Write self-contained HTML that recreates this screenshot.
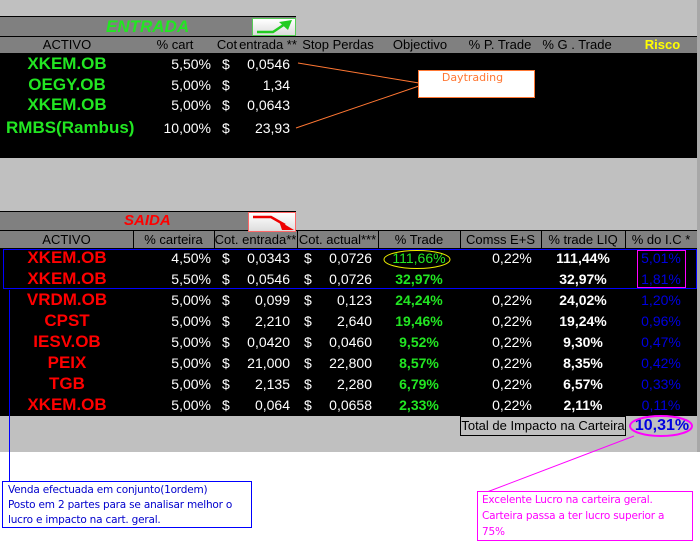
<!DOCTYPE html>
<html><head><meta charset="utf-8"><style>
*{margin:0;padding:0;box-sizing:border-box}
body{width:700px;height:545px;background:#fff;position:relative;overflow:hidden;font-family:"Liberation Sans",sans-serif}
div,span{position:absolute}
.t{line-height:20px;white-space:nowrap;font-size:14px}
.h{font-size:13px;color:#000;line-height:16px;text-align:center;white-space:nowrap}
.w{color:#fff}.g{color:#22e622;font-weight:bold}.r{color:#f00;font-weight:bold;font-size:17px}.b{color:#0000e0}
.c{text-align:center}.rt{text-align:right}
</style></head><body>
<div style="left:0;top:0;width:700px;height:452px;background:#c0c0c0"></div>
<div style="left:0;top:16px;width:296px;height:1px;background:#000"></div>
<div style="left:0;top:17px;width:296px;height:19px;background:#808080"></div>
<div style="left:0;top:36px;width:697px;height:1px;background:#000"></div>
<div style="left:0;top:37px;width:697px;height:16px;background:#808080"></div>
<div style="left:0;top:53px;width:697px;height:105px;background:#000"></div>
<div class="t" style="left:106px;top:17px;font-size:17px;font-style:italic;font-weight:bold;color:#22e622;line-height:19px">ENTRADA</div>
<div style="left:252px;top:18px;width:44px;height:18px;border:1px solid #5c5;background:linear-gradient(#fff,#ddd)">
<svg width="42" height="16" style="position:absolute;left:0;top:0"><path d="M4 13 H20 L32 5" stroke="#2c2" stroke-width="2.5" fill="none"/><path d="M26 3 L39 1 L35 11 Z" fill="#2c2"/></svg></div>
<div class="h" style="left:20px;top:37px;width:94px">ACTIVO</div>
<div class="h" style="left:150px;top:37px;width:50px">% cart</div>
<div class="h" style="left:212px;top:37px;width:30px">Cot</div>
<div class="h" style="left:238px;top:37px;width:60px">entrada **</div>
<div class="h" style="left:300px;top:37px;width:76px">Stop Perdas</div>
<div class="h" style="left:385px;top:37px;width:70px">Objectivo</div>
<div class="h" style="left:465px;top:37px;width:70px">% P. Trade</div>
<div class="h" style="left:542px;top:37px;width:70px">% G . Trade</div>
<div class="h" style="left:635px;top:37px;width:55px;color:#ff0;font-weight:bold">Risco</div>
<div class="t g c" style="left:0;top:54px;width:134px;font-size:17px">XKEM.OB</div>
<div class="t g c" style="left:0;top:75px;width:134px;font-size:17px">OEGY.OB</div>
<div class="t g c" style="left:0;top:95px;width:134px;font-size:17px">XKEM.OB</div>
<div class="t g" style="left:6px;top:118px;font-size:17px">RMBS(Rambus)</div>
<div class="t w rt" style="right:489px;top:54px">5,50%</div>
<div class="t w rt" style="right:489px;top:75px">5,00%</div>
<div class="t w rt" style="right:489px;top:95px">5,00%</div>
<div class="t w rt" style="right:489px;top:118px">10,00%</div>
<div class="t w" style="left:222px;top:54px">$</div><div class="t w" style="left:222px;top:75px">$</div><div class="t w" style="left:222px;top:95px">$</div><div class="t w" style="left:222px;top:118px">$</div>
<div class="t w rt" style="right:410px;top:54px">0,0546</div>
<div class="t w rt" style="right:410px;top:75px">1,34</div>
<div class="t w rt" style="right:410px;top:95px">0,0643</div>
<div class="t w rt" style="right:410px;top:118px">23,93</div>
<svg width="700" height="545" style="position:absolute;left:0;top:0">
<line x1="298" y1="63" x2="419" y2="83" stroke="#f73" stroke-width="1"/>
<line x1="296" y1="128" x2="419" y2="86" stroke="#f73" stroke-width="1"/>
</svg>
<div style="left:418px;top:70px;width:117px;height:28px;background:#fff;border:1px solid #f73;font-family:'DejaVu Sans',sans-serif;font-size:11px;color:#f73;line-height:14px;padding-left:0;text-indent:-8px;text-align:center">Daytrading</div>

<div style="left:0;top:211px;width:296px;height:1px;background:#000"></div>
<div style="left:0;top:212px;width:296px;height:18px;background:#808080"></div>
<div style="left:0;top:230px;width:697px;height:1px;background:#000"></div>
<div style="left:0;top:231px;width:697px;height:17px;background:#808080"></div>
<div class="t" style="left:124px;top:212px;font-size:15px;font-style:italic;font-weight:bold;color:#f00;line-height:18px">SAIDA</div>
<div style="left:248px;top:212px;width:48px;height:20px;border:1px solid #f66;background:linear-gradient(#fff,#ddd)">
<svg width="46" height="18" style="position:absolute;left:0;top:0"><path d="M4 4 H22 L36 12" stroke="#e00" stroke-width="2.5" fill="none"/><path d="M30 8 L45 17 L33 17 Z" fill="#e00"/></svg></div>
<div style="left:0;top:248px;width:697px;height:168px;background:#000"></div>
<div style="left:133px;top:231px;width:1px;height:17px;background:#000"></div>
<div style="left:214px;top:231px;width:1px;height:17px;background:#000"></div>
<div style="left:297px;top:231px;width:1px;height:17px;background:#000"></div>
<div style="left:378px;top:231px;width:1px;height:17px;background:#000"></div>
<div style="left:460px;top:231px;width:1px;height:17px;background:#000"></div>
<div style="left:541px;top:231px;width:1px;height:17px;background:#000"></div>
<div style="left:625px;top:231px;width:1px;height:17px;background:#000"></div>
<div class="h" style="left:0;top:232px;width:133px">ACTIVO</div>
<div class="h" style="left:133px;top:232px;width:81px">% carteira</div>
<div class="h" style="left:214px;top:232px;width:83px">Cot. entrada**</div>
<div class="h" style="left:297px;top:232px;width:81px">Cot. actual***</div>
<div class="h" style="left:378px;top:232px;width:82px">% Trade</div>
<div class="h" style="left:460px;top:232px;width:81px">Comss E+S</div>
<div class="h" style="left:541px;top:232px;width:84px">% trade LIQ</div>
<div class="h" style="left:625px;top:232px;width:72px">% do I.C *</div>

<div class="t r c" style="left:0;top:248px;width:134px">XKEM.OB</div>
<div class="t r c" style="left:0;top:269px;width:134px">XKEM.OB</div>
<div class="t r c" style="left:0;top:290px;width:134px">VRDM.OB</div>
<div class="t r c" style="left:0;top:311px;width:134px">CPST</div>
<div class="t r c" style="left:0;top:332px;width:134px">IESV.OB</div>
<div class="t r c" style="left:0;top:353px;width:134px">PEIX</div>
<div class="t r c" style="left:0;top:374px;width:134px">TGB</div>
<div class="t r c" style="left:0;top:395px;width:134px">XKEM.OB</div>

<div class="t w rt" style="right:489px;top:248px">4,50%</div>
<div class="t w rt" style="right:489px;top:269px">5,50%</div>
<div class="t w rt" style="right:489px;top:290px">5,00%</div>
<div class="t w rt" style="right:489px;top:311px">5,00%</div>
<div class="t w rt" style="right:489px;top:332px">5,00%</div>
<div class="t w rt" style="right:489px;top:353px">5,00%</div>
<div class="t w rt" style="right:489px;top:374px">5,00%</div>
<div class="t w rt" style="right:489px;top:395px">5,00%</div>

<div class="t w" style="left:222px;top:248px">$</div><div class="t w" style="left:222px;top:269px">$</div><div class="t w" style="left:222px;top:290px">$</div><div class="t w" style="left:222px;top:311px">$</div><div class="t w" style="left:222px;top:332px">$</div><div class="t w" style="left:222px;top:353px">$</div><div class="t w" style="left:222px;top:374px">$</div><div class="t w" style="left:222px;top:395px">$</div>
<div class="t w" style="left:304px;top:248px">$</div><div class="t w" style="left:304px;top:269px">$</div><div class="t w" style="left:304px;top:290px">$</div><div class="t w" style="left:304px;top:311px">$</div><div class="t w" style="left:304px;top:332px">$</div><div class="t w" style="left:304px;top:353px">$</div><div class="t w" style="left:304px;top:374px">$</div><div class="t w" style="left:304px;top:395px">$</div>

<div class="t w rt" style="right:410px;top:248px">0,0343</div>
<div class="t w rt" style="right:410px;top:269px">0,0546</div>
<div class="t w rt" style="right:410px;top:290px">0,099</div>
<div class="t w rt" style="right:410px;top:311px">2,210</div>
<div class="t w rt" style="right:410px;top:332px">0,0420</div>
<div class="t w rt" style="right:410px;top:353px">21,000</div>
<div class="t w rt" style="right:410px;top:374px">2,135</div>
<div class="t w rt" style="right:410px;top:395px">0,064</div>

<div class="t w rt" style="right:328px;top:248px">0,0726</div>
<div class="t w rt" style="right:328px;top:269px">0,0726</div>
<div class="t w rt" style="right:328px;top:290px">0,123</div>
<div class="t w rt" style="right:328px;top:311px">2,640</div>
<div class="t w rt" style="right:328px;top:332px">0,0460</div>
<div class="t w rt" style="right:328px;top:353px">22,800</div>
<div class="t w rt" style="right:328px;top:374px">2,280</div>
<div class="t w rt" style="right:328px;top:395px">0,0658</div>

<div class="t g c" style="left:378px;top:248px;width:82px;font-weight:normal">111,66%</div>
<div class="t g c" style="left:378px;top:269px;width:82px">32,97%</div>
<div class="t g c" style="left:378px;top:290px;width:82px">24,24%</div>
<div class="t g c" style="left:378px;top:311px;width:82px">19,46%</div>
<div class="t g c" style="left:378px;top:332px;width:82px">9,52%</div>
<div class="t g c" style="left:378px;top:353px;width:82px">8,57%</div>
<div class="t g c" style="left:378px;top:374px;width:82px">6,79%</div>
<div class="t g c" style="left:378px;top:395px;width:82px">2,33%</div>

<div class="t w c" style="left:472px;top:248px;width:80px">0,22%</div>
<div class="t w c" style="left:472px;top:290px;width:80px">0,22%</div>
<div class="t w c" style="left:472px;top:311px;width:80px">0,22%</div>
<div class="t w c" style="left:472px;top:332px;width:80px">0,22%</div>
<div class="t w c" style="left:472px;top:353px;width:80px">0,22%</div>
<div class="t w c" style="left:472px;top:374px;width:80px">0,22%</div>
<div class="t w c" style="left:472px;top:395px;width:80px">0,22%</div>

<div class="t w c" style="left:541px;top:248px;width:84px;font-weight:bold">111,44%</div>
<div class="t w c" style="left:541px;top:269px;width:84px;font-weight:bold">32,97%</div>
<div class="t w c" style="left:541px;top:290px;width:84px;font-weight:bold">24,02%</div>
<div class="t w c" style="left:541px;top:311px;width:84px;font-weight:bold">19,24%</div>
<div class="t w c" style="left:541px;top:332px;width:84px;font-weight:bold">9,30%</div>
<div class="t w c" style="left:541px;top:353px;width:84px;font-weight:bold">8,35%</div>
<div class="t w c" style="left:541px;top:374px;width:84px;font-weight:bold">6,57%</div>
<div class="t w c" style="left:541px;top:395px;width:84px;font-weight:bold">2,11%</div>

<div class="t b c" style="left:625px;top:248px;width:72px">5,01%</div>
<div class="t b c" style="left:625px;top:269px;width:72px">1,81%</div>
<div class="t b c" style="left:625px;top:290px;width:72px">1,20%</div>
<div class="t b c" style="left:625px;top:311px;width:72px">0,96%</div>
<div class="t b c" style="left:625px;top:332px;width:72px">0,47%</div>
<div class="t b c" style="left:625px;top:353px;width:72px">0,42%</div>
<div class="t b c" style="left:625px;top:374px;width:72px">0,33%</div>
<div class="t b c" style="left:625px;top:395px;width:72px">0,11%</div>

<div style="left:460px;top:416px;width:166px;height:20px;border:1px solid #000;background:#c0c0c0;font-size:13px;line-height:18px;text-align:center;white-space:nowrap">Total de Impacto na Carteira</div>
<div class="t c" style="left:628px;top:416px;width:68px;color:#0000e0;font-weight:bold;font-size:16px">10,31%</div>
<div style="left:697px;top:0;width:3px;height:452px;background:#a8a8a8"></div>

<svg width="700" height="545" style="position:absolute;left:0;top:0">
<rect x="3.5" y="249.5" width="693" height="39" fill="none" stroke="#00f" stroke-width="1"/>
<ellipse cx="417" cy="259.5" rx="33" ry="9" fill="none" stroke="#ee0" stroke-width="1"/>
<rect x="637.5" y="250.5" width="48" height="37" fill="none" stroke="#f0f" stroke-width="1"/>
<line x1="9.5" y1="290" x2="9.5" y2="482" stroke="#00f" stroke-width="1"/>
<ellipse cx="661" cy="426" rx="31" ry="10" fill="none" stroke="#f0f" stroke-width="2"/>
<line x1="634" y1="436" x2="487" y2="492" stroke="#f0f" stroke-width="1"/>
</svg>
<div style="left:2px;top:481px;width:250px;height:47px;border:1px solid #00f;background:#fff;font-family:'DejaVu Sans',sans-serif;font-size:10.5px;color:#00c;line-height:15px;padding:1px 0 0 5px;white-space:nowrap;letter-spacing:-0.2px">Venda efectuada em conjunto(1ordem)<br>Posto em 2 partes para se analisar melhor o<br>lucro e impacto na cart. geral.</div>
<div style="left:477px;top:491px;width:216px;height:50px;border:1px solid #f0f;background:#fff;font-family:'DejaVu Sans',sans-serif;font-size:10.5px;color:#f0f;line-height:16px;padding:0 0 0 4px;white-space:nowrap;letter-spacing:-0.2px">Excelente Lucro na carteira geral.<br>Carteira passa a ter lucro superior a<br>75%</div>
</body></html>
